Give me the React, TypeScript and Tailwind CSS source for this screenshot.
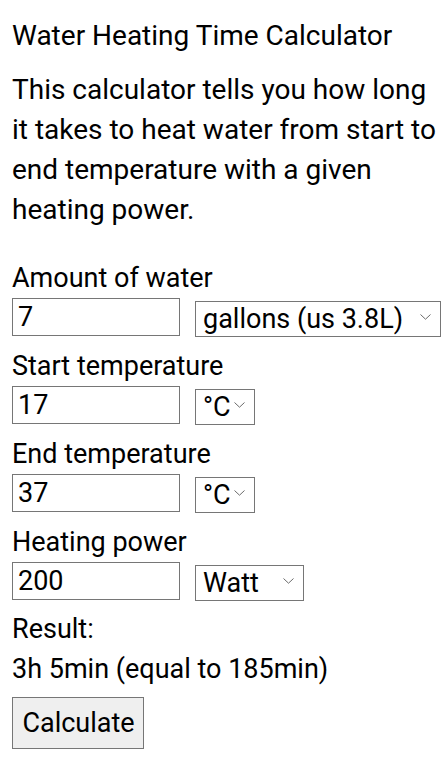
import { useState } from "react";

function Chevron() {
  return (
    <svg width="11" height="6" viewBox="0 0 11 6" className="pointer-events-none absolute right-[10px] top-1/2 -translate-y-1/2">
      <path d="M0.5 0.5 L5.5 5.2 L10.5 0.5" fill="none" stroke="#6b6b6b" strokeWidth="1" />
    </svg>
  );
}

function Select({ width, value, options }: { width: string; value: string; options: string[] }) {
  return (
    <div className={`relative ml-[15px] h-[36px] shrink-0 ${width}`}>
      <select
        defaultValue={value}
        className="h-full w-full appearance-none rounded-none border border-[#767676] bg-white pl-[7px] pr-6 text-[27px] leading-[34px] text-black outline-none"
      >
        {options.map((o) => (
          <option key={o}>{o}</option>
        ))}
      </select>
      <Chevron />
    </div>
  );
}

function Field({ label, value, unit }: { label: string; value: string; unit: React.ReactNode }) {
  return (
    <div className="mb-[10px]">
      <p className="leading-[40px]">{label}</p>
      <div className="flex h-[38px] items-center">
        <input
          defaultValue={value}
          className="h-[38px] w-[168px] shrink-0 rounded-none border border-[#767676] bg-white px-[5px] text-[27px] text-black outline-none"
        />
        {unit}
      </div>
    </div>
  );
}

export default function App() {
  const [result] = useState("3h 5min (equal to 185min)");

  return (
    <main className="min-h-screen bg-white pl-[12px] pr-[4px] pt-[16px] text-[27px] text-black" style={{ fontFamily: "Roboto, 'Noto Sans', sans-serif" }}>
      <p className="text-[28px] leading-[40px]">Water Heating Time Calculator</p>
      <p className="mt-[14px] text-[28px] leading-[40px]">
        This calculator tells you how long it takes to heat water from start to end temperature with a given heating power.
      </p>

      <div className="mt-[28px]">
        <Field label="Amount of water" value="7" unit={<Select width="w-[246px]" value="gallons (us 3.8L)" options={["liters", "gallons (us 3.8L)", "gallons (uk 4.5L)"]} />} />
        <Field label="Start temperature" value="17" unit={<Select width="w-[60px]" value="°C" options={["°C", "°F"]} />} />
        <Field label="End temperature" value="37" unit={<Select width="w-[60px]" value="°C" options={["°C", "°F"]} />} />
        <Field label="Heating power" value="200" unit={<Select width="w-[109px]" value="Watt" options={["Watt", "kW", "BTU/h"]} />} />
      </div>

      <p className="-mt-[1px] leading-[40px]">Result:</p>
      <p className="leading-[40px]">{result}</p>
      <button className="mt-[8px] h-[52px] w-[132px] border border-[#767676] bg-[#efefef] pl-[1px] text-[27px] text-black">Calculate</button>
    </main>
  );
}
